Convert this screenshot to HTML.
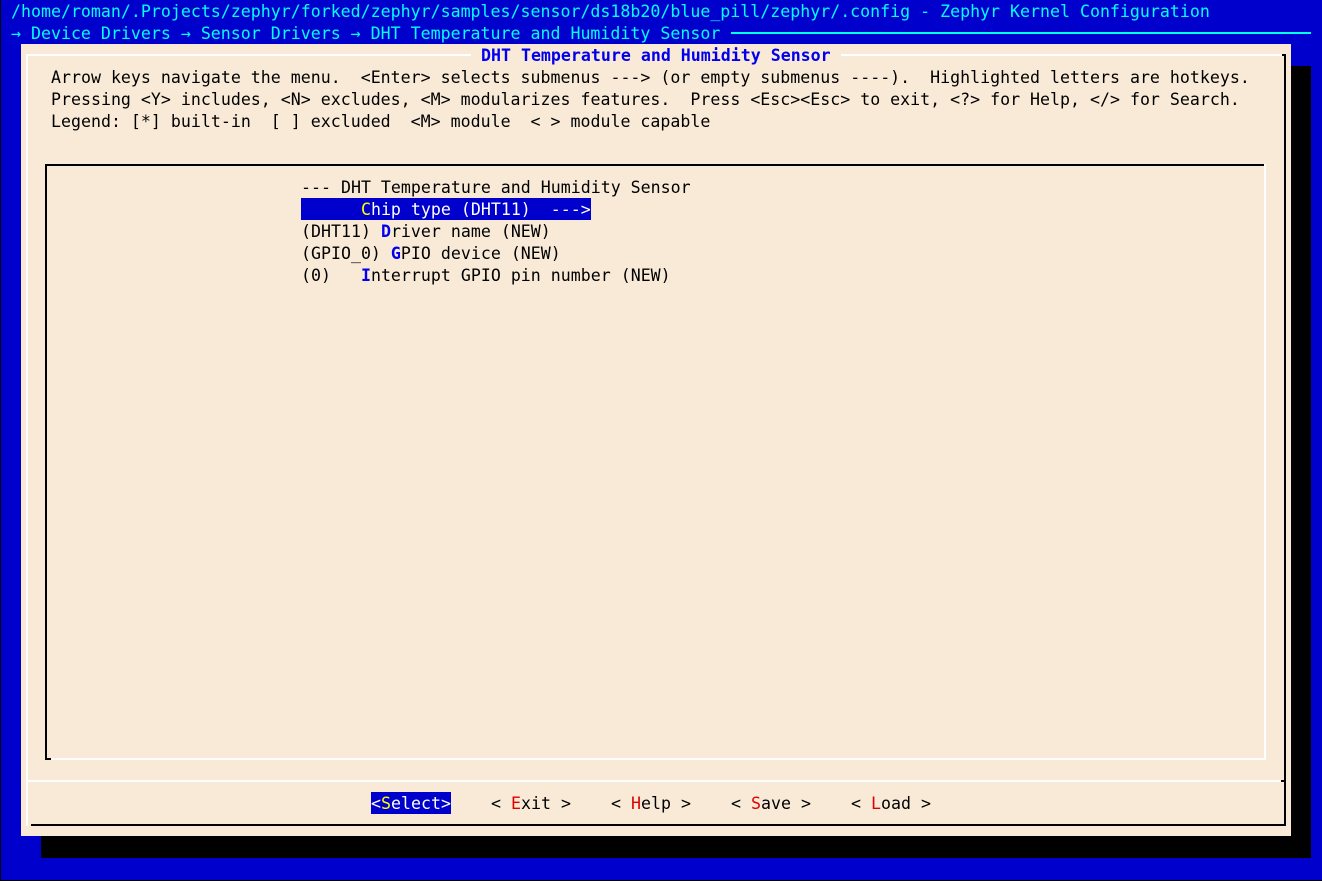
<!DOCTYPE html>
<html><head><meta charset="utf-8"><style>
html,body{margin:0;padding:0}
body{width:1322px;height:881px;background:#0000cc;position:relative;overflow:hidden;font-family:"DejaVu Sans Mono","Liberation Mono",monospace;font-size:16.6px;line-height:22px}
.t{position:absolute;white-space:pre;height:22px;margin-top:1px}
.a{position:absolute}
.c{color:#00ffff}
.k{color:#000}
.hb{color:#0000ee;font-weight:bold}
.hr{color:#dd0000}
.y{color:#ffff00}
.sel{padding-top:0;margin-top:0;line-height:24px;height:22px}
</style></head><body>
<div class="a" style="left:0;top:0;width:1px;height:881px;background:#000"></div>
<div class="a" style="left:0;top:880px;width:1322px;height:1px;background:#000"></div>
<div class="t c" style="left:11px;top:0">/home/roman/.Projects/zephyr/forked/zephyr/samples/sensor/ds18b20/blue_pill/zephyr/.config - Zephyr Kernel Configuration</div>
<div class="t c" style="left:11px;top:22px">→ Device Drivers → Sensor Drivers → DHT Temperature and Humidity Sensor</div>
<div class="a" style="left:731px;top:32px;width:580px;height:2px;background:#00ffff"></div>
<div class="a" style="left:41px;top:66px;width:1270px;height:792px;background:#000"></div>
<div class="a" style="left:21px;top:44px;width:1270px;height:792px;background:#f9ead7"></div>
<div class="a" style="left:26px;top:54px;width:1260px;height:2px;background:#fff"></div>
<div class="a" style="left:26px;top:54px;width:2px;height:772px;background:#fff"></div>
<div class="a" style="left:1282px;top:54px;width:4px;height:2px;background:#000"></div>
<div class="a" style="left:1284px;top:54px;width:2px;height:772px;background:#000"></div>
<div class="a" style="left:31px;top:824px;width:1255px;height:2px;background:#000"></div>
<div class="a" style="left:26px;top:780px;width:1255px;height:2px;background:#fff"></div>
<div class="a" style="left:1281px;top:780px;width:5px;height:2px;background:#000"></div>
<div class="t hb" style="left:471px;top:44px;background:#f9ead7"> DHT Temperature and Humidity Sensor </div>
<div class="t k" style="left:51px;top:66px">Arrow keys navigate the menu.  &lt;Enter&gt; selects submenus ---&gt; (or empty submenus ----).  Highlighted letters are hotkeys.</div>
<div class="t k" style="left:51px;top:88px">Pressing &lt;Y&gt; includes, &lt;N&gt; excludes, &lt;M&gt; modularizes features.  Press &lt;Esc&gt;&lt;Esc&gt; to exit, &lt;?&gt; for Help, &lt;/&gt; for Search.</div>
<div class="t k" style="left:51px;top:110px">Legend: [*] built-in  [ ] excluded  &lt;M&gt; module  &lt; &gt; module capable</div>
<div class="a" style="left:45px;top:164px;width:1221px;height:2px;background:#000"></div>
<div class="a" style="left:45px;top:164px;width:2px;height:596px;background:#000"></div>
<div class="a" style="left:1264px;top:164px;width:2px;height:596px;background:#fff"></div>
<div class="a" style="left:51px;top:758px;width:1215px;height:2px;background:#fff"></div>
<div class="a" style="left:45px;top:758px;width:6px;height:2px;background:#000"></div>
<div class="t k" style="left:301px;top:176px">--- DHT Temperature and Humidity Sensor</div>
<div class="t sel" style="left:301px;top:198px;background:#0000cc;color:#fff">      <span class="y">C</span>hip type (DHT11)  ---&gt;</div>
<div class="t k" style="left:301px;top:220px">(DHT11) <span class="hb">D</span>river name (NEW)</div>
<div class="t k" style="left:301px;top:242px">(GPIO_0) <span class="hb">G</span>PIO device (NEW)</div>
<div class="t k" style="left:301px;top:264px">(0)   <span class="hb">I</span>nterrupt GPIO pin number (NEW)</div>
<div class="t sel" style="left:371px;top:792px;background:#0000cc;color:#fff">&lt;<span class="y">S</span>elect&gt;</div>
<div class="t k" style="left:491px;top:792px">&lt; <span class="hr">E</span>xit &gt;</div>
<div class="t k" style="left:611px;top:792px">&lt; <span class="hr">H</span>elp &gt;</div>
<div class="t k" style="left:731px;top:792px">&lt; <span class="hr">S</span>ave &gt;</div>
<div class="t k" style="left:851px;top:792px">&lt; <span class="hr">L</span>oad &gt;</div>
</body></html>
